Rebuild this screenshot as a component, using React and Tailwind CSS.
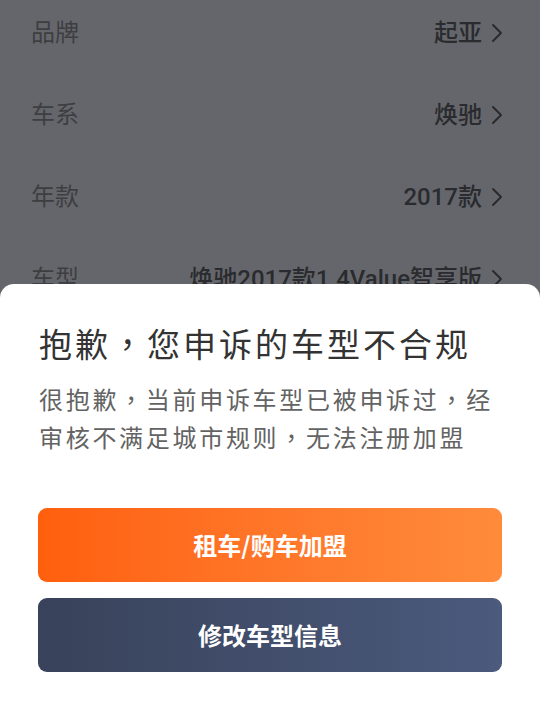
import React from "react";

const Chevron = () => (
  <svg width="12" height="20" viewBox="0 0 12 20" fill="none" className="shrink-0">
    <path d="M2 2 L10 10 L2 18" stroke="#2a2b2e" strokeWidth="2" strokeLinecap="round" strokeLinejoin="round" />
  </svg>
);

const rows = [
  { label: "品牌", value: "起亚" },
  { label: "车系", value: "焕驰" },
  { label: "年款", value: "2017款" },
  { label: "车型", value: "焕驰2017款1.4Value智享版" },
];

const C = ({ children }) => (
  <span style={{ fontFamily: '"Noto Sans CJK TC", sans-serif' }}>{children}</span>
);

export default function App() {
  return (
    <div
      className="relative w-[540px] h-[702px] overflow-hidden bg-[#65666b]"
      style={{ fontFamily: 'Roboto, "Noto Sans CJK SC", "Noto Sans", sans-serif' }}
    >
      <div className="flex flex-col -mt-[8px] pl-[31px] pr-[37px]">
        {rows.map((r) => (
          <div key={r.label} className="flex h-[82px] items-center justify-between">
            <span className="text-[24px] text-[#3d3e42]">{r.label}</span>
            <div className="flex items-center gap-[9px]">
              <span className="text-[24px] font-medium text-[#2a2b2e]">{r.value}</span>
              <Chevron />
            </div>
          </div>
        ))}
      </div>

      <div
        className="absolute left-0 right-0 bottom-0 top-[284px] bg-white rounded-t-[14px] px-[38px] pt-[39px]"
        style={{ fontFamily: '"Noto Sans CJK SC", "Noto Sans", sans-serif' }}
      >
        <div className="h-[40px] text-[33px] leading-[40px] tracking-[3px] text-[#333333] pl-[1px] whitespace-nowrap">
          抱歉<C>，</C>您申诉的车型不合规
        </div>
        <div className="mt-[17px] text-[24px] leading-[38px] tracking-[2.7px] text-[#636363] pl-[1px]">
          <div className="h-[38px] whitespace-nowrap">很抱歉<C>，</C>当前申诉车型已被申诉过<C>，</C>经</div>
          <div className="h-[38px] whitespace-nowrap">审核不满足城市规则<C>，</C>无法注册加盟</div>
        </div>
        <div className="mt-[52px] flex flex-col gap-[16px]">
          <button className="h-[74px] w-full rounded-[9px] bg-linear-to-r from-[#ff5f0c] to-[#ff8b3b] text-white text-[24px] font-bold">
            租车/购车加盟
          </button>
          <button className="h-[74px] w-full rounded-[9px] bg-linear-to-r from-[#38425a] to-[#4b5a7d] text-white text-[24px] font-bold">
            修改车型信息
          </button>
        </div>
      </div>
    </div>
  );
}
